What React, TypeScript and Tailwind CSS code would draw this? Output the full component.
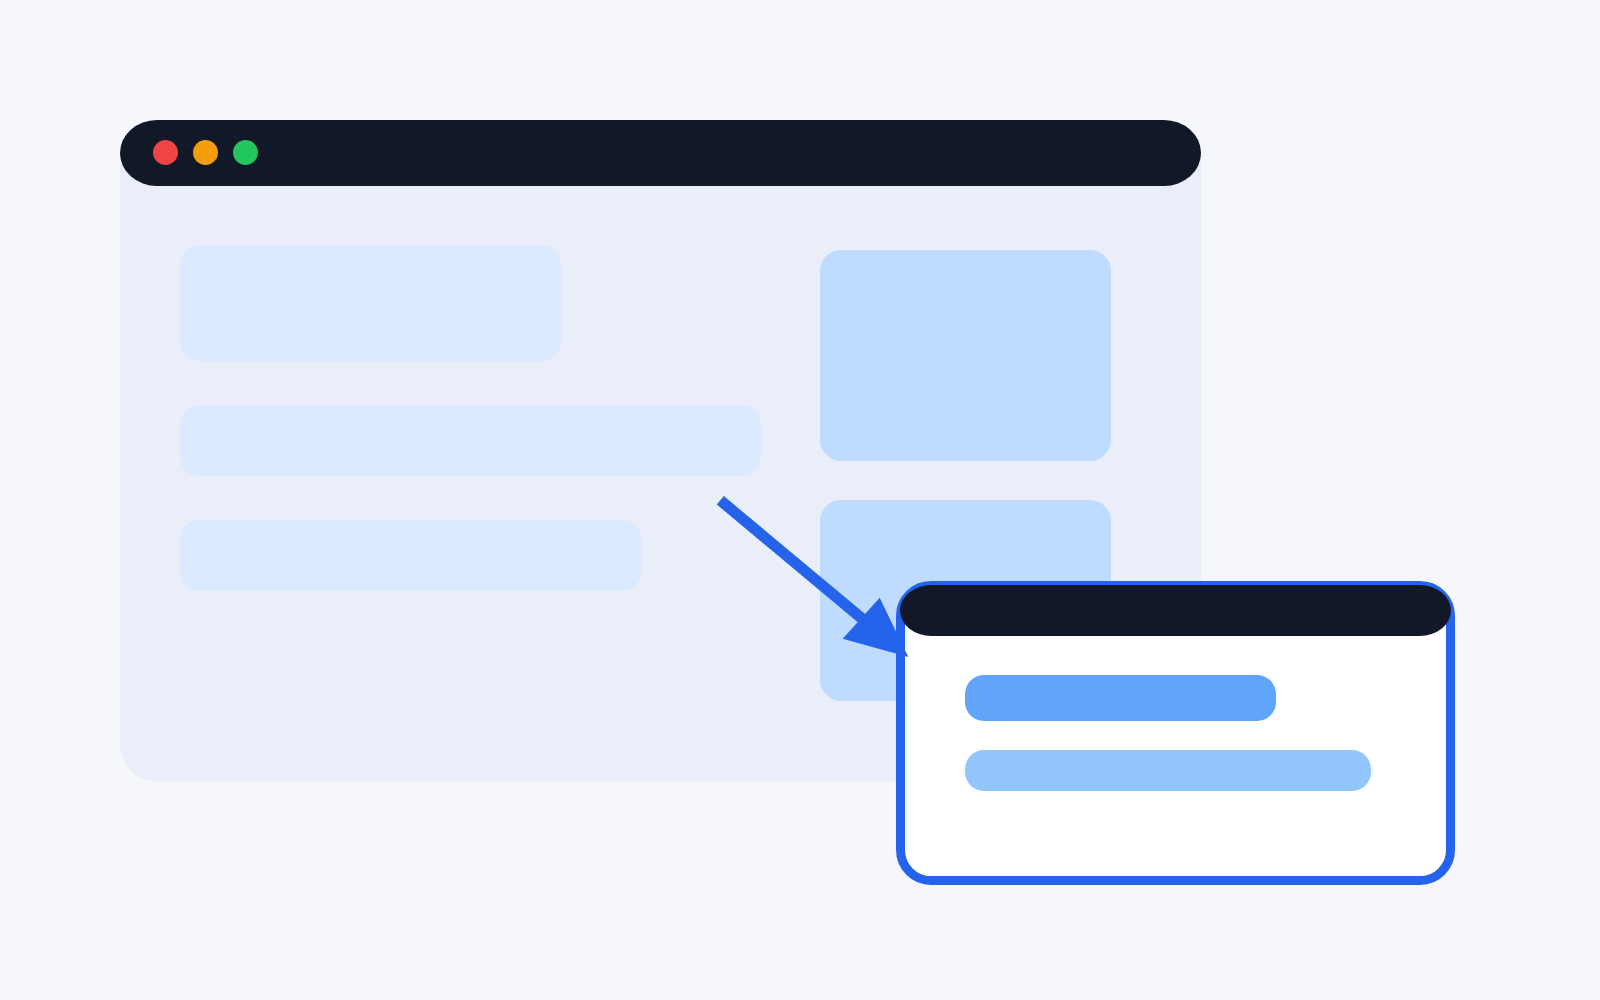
const DOTS = ['bg-[#ef4444]', 'bg-[#f59e0b]', 'bg-[#22c55e]']

interface BlockProps {
  className: string
}

function Block({ className }: BlockProps) {
  return <div className={`max-w-full ${className}`} />
}

function MainWindow() {
  return (
    <section className="w-full max-w-[1081px] rounded-[36px] bg-[#e9eef9]">
      {/* Title bar */}
      <div className="flex h-[66px] items-start gap-[15px] rounded-[37px/33px] bg-[#111827] px-[33px] pt-5">
        {DOTS.map((color) => (
          <span key={color} className={`h-[25px] w-[25px] rounded-full ${color}`} />
        ))}
      </div>

      {/* Content */}
      <div className="flex items-end gap-[59px] pt-16 pr-[90px] pb-20 pl-[60px]">
        <div className="-mt-[5px] flex min-w-0 flex-1 flex-col gap-11 self-start">
          <Block className="h-[116px] w-[381px] rounded-[19px] bg-[#dbeafe]" />
          <Block className="h-[71px] w-[581px] rounded-[19px] bg-[#dbeafe]" />
          <Block className="h-[71px] w-[461px] rounded-[19px] bg-[#dbeafe]" />
        </div>
        <div className="flex w-[291px] flex-col gap-[39px]">
          <Block className="h-[211px] rounded-[21px] bg-[#bfdbfe]" />
          <Block className="h-[201px] rounded-[21px] bg-[#bfdbfe]" />
        </div>
      </div>
    </section>
  )
}

function FloatingWindow() {
  return (
    <section className="absolute top-[461px] left-[776px] w-[559px] rounded-[35px] border-[9px] border-[#2563eb] bg-white">
      {/* Title bar overlaps the inner part of the border */}
      <div className="-mx-[5px] -mt-[5px] h-[51px] rounded-[32px/26px] bg-[#111827]" />
      <div className="flex flex-col gap-[29px] px-[60px] pt-[39px] pb-[85px]">
        <Block className="h-[46px] w-[311px] rounded-[19px] bg-[#60a5fa]" />
        <Block className="h-[41px] w-[406px] rounded-[19px] bg-[#93c5fd]" />
      </div>
    </section>
  )
}

function Arrow() {
  return (
    <svg
      className="absolute top-[370px] left-[590px]"
      width="210"
      height="180"
      viewBox="0 0 210 180"
      fill="#2563eb"
      aria-hidden="true"
    >
      <path d="M10.3 10.3 L160 135.3" stroke="#2563eb" strokeWidth="11" />
      <path d="M169.7 107.7 L198.3 167 L132.7 148.7 Z" />
    </svg>
  )
}

export default function App() {
  return (
    <main className="min-h-screen bg-[#f5f7fb] p-[120px]">
      <div className="relative">
        <MainWindow />
        <FloatingWindow />
        <Arrow />
      </div>
    </main>
  )
}
